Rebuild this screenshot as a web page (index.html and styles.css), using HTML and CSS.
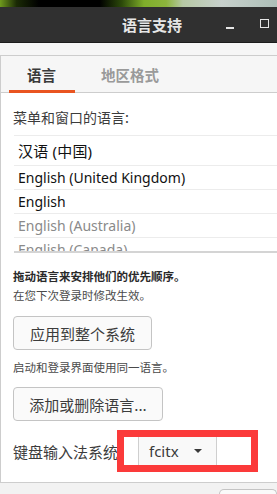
FILE: index.html
```html
<!DOCTYPE html>
<html lang="zh-CN">
<head>
    <meta charset="UTF-8">
    <meta name="viewport" content="width=device-width, initial-scale=1">
    <title>语言支持</title>
    <link rel="stylesheet" href="styles.css">
</head>
<body>
    <div class="wallpaper"></div>
    <header class="titlebar">
        <span class="title">语言支持</span>
        <span class="wbtn minimize"></span>
        <span class="wbtn maximize"></span>
    </header>
    <div class="window">
        <div class="notebook">
            <nav class="tabs">
                <span class="tab active">语言</span>
                <span class="tab">地区格式</span>
            </nav>
            <main class="page">
                <p class="heading">菜单和窗口的语言:</p>
                <div class="langlist">
                    <div class="row first">汉语 (中国)</div>
                    <div class="row">English (United Kingdom)</div>
                    <div class="row">English</div>
                    <div class="row dim">English (Australia)</div>
                    <div class="row dim">English (Canada)</div>
                </div>
                <p class="hint bold">拖动语言来安排他们的优先顺序。</p>
                <p class="hint">在您下次登录时修改生效。</p>
                <button class="btn apply">应用到整个系统</button>
                <p class="hint note">启动和登录界面使用同一语言。</p>
                <button class="btn add">添加或删除语言...</button>
                <div class="im-row">
                    <span class="im-label">键盘输入法系统</span>
                    <div class="highlight">
                        <div class="combo">
                            <span>fcitx</span>
                            <span class="arrow"></span>
                        </div>
                    </div>
                </div>
            </main>
        </div>
        <footer class="bottom">
            <span class="close-btn"></span>
        </footer>
    </div>
</body>
</html>
```

FILE: styles.css
```css
* {
    margin: 0;
    padding: 0;
    box-sizing: border-box;
}

body {
    width: 277px;
    height: 494px;
    overflow: hidden;
    font-family: "Noto Sans", "Noto Sans CJK SC", sans-serif;
    color: #3c3c3c;
    background: #f6f6f6;
}

.wallpaper {
    height: 7px;
    background: linear-gradient(90deg, #6f9a1e 0%, #1a2a05 6%, #000 14%, #000 36%, #2c4a0a 44%, #7fae2a 52%, #8cb43c 60%, #b6c8a4 66%, #c7d0cc 80%, #aebfb8 100%);
}

.titlebar {
    height: 36px;
    background: #303030;
    display: flex;
    align-items: center;
    padding-left: 122px;
    border-bottom: 1px solid #1c1c1c;
}

.title {
    font-family: "Noto Sans CJK SC", sans-serif;
    font-size: 15px;
    font-weight: bold;
    color: #e6e6e6;
    line-height: 20px;
}

.wbtn {
    display: block;
    border-color: #e6e6e6;
    border-style: solid;
}

.minimize {
    width: 8px;
    height: 2px;
    border-width: 0 0 2px 0;
    margin: 6px 0 0 44px;
}

.maximize {
    width: 9px;
    height: 9px;
    border-width: 1.5px;
    margin: 0 0 2px 26px;
}

.window {
    padding-top: 12px;
}

.notebook {
    border-top: 1px solid #cdcdcd;
    border-left: 1px solid #cdcdcd;
    height: 427px;
    display: flex;
    flex-direction: column;
}

.tabs {
    height: 37px;
    display: flex;
    border-bottom: 1px solid #cdcdcd;
    padding-left: 8px;
}

.tab {
    font-family: "Noto Sans CJK SC", sans-serif;
    font-size: 14.5px;
    font-weight: bold;
    color: #9a9a9a;
    padding: 8px 0 0 26px;
    white-space: nowrap;
}

.tab.active {
    color: #3a3a3a;
    width: 66px;
    padding-left: 18px;
    border-bottom: 3px solid #e95420;
    margin-bottom: -1px;
}

.page {
    flex: 1;
    background: #ffffff;
    padding: 14px 0 0 12px;
    overflow: hidden;
}

.heading {
    font-family: "Noto Sans CJK SC", sans-serif;
    font-size: 14px;
    line-height: 20px;
    color: #3c3c3c;
}

.langlist {
    margin: 8px 0 0 1px;
    height: 118px;
    overflow: hidden;
    border-top: 1px solid #ececec;
    border-bottom: 2px solid #d4d4d4;
}

.row {
    height: 24px;
    line-height: 23px;
    padding-left: 4px;
    font-size: 14px;
    color: #111;
    border-bottom: 1px solid #ececec;
}

.row.first {
    height: 30px;
    line-height: 30px;
    font-size: 15px;
    letter-spacing: 0.2px;
}

.row.dim {
    color: #8a8a8a;
}

.hint {
    font-family: "Noto Sans CJK SC", sans-serif;
    font-size: 11.5px;
    line-height: 19px;
    color: #4a4a4a;
}

.hint.bold {
    font-weight: bold;
    color: #2a2a2a;
    margin-top: 14px;
}

.btn {
    display: block;
    height: 34px;
    font-family: "Noto Sans CJK SC", sans-serif;
    font-size: 15px;
    color: #3c3c3c;
    background: #fafafa;
    border: 1px solid #c4c4c4;
    border-radius: 4px;
}

.apply {
    width: 139px;
    margin-top: 11px;
}

.note {
    margin-top: 7px;
    line-height: 20px;
}

.add {
    width: 150px;
    margin-top: 10px;
}

.im-row {
    display: flex;
    align-items: center;
    margin-top: 9px;
}

.im-label {
    font-family: "Noto Sans CJK SC", sans-serif;
    font-size: 15px;
    color: #3c3c3c;
    width: 104px;
    white-space: nowrap;
    overflow: hidden;
}

.highlight {
    width: 141px;
    height: 42px;
    border: 7px solid #fb3a3a;
    background: #ffffff;
    padding: 0 34px 0 14px;
}

.combo {
    height: 100%;
    border-left: 1px solid #cfcfcf;
    border-right: 1px solid #cfcfcf;
    background: #f9f9f9;
    display: flex;
    align-items: center;
    padding-left: 10px;
    font-size: 15px;
    color: #3a3a3a;
}

.arrow {
    width: 0;
    height: 0;
    border-left: 4px solid transparent;
    border-right: 4px solid transparent;
    border-top: 4px solid #3a3a3a;
    margin-left: 15px;
}

.bottom {
    height: 12px;
    border-top: 1px solid #cdcdcd;
    background: #f2f2f2;
    padding: 6px 0 0 219px;
}

.close-btn {
    display: block;
    height: 10px;
    border: 1px solid #c4c4c4;
    border-bottom: none;
    border-radius: 5px 5px 0 0;
    background: #fafafa;
}
```
